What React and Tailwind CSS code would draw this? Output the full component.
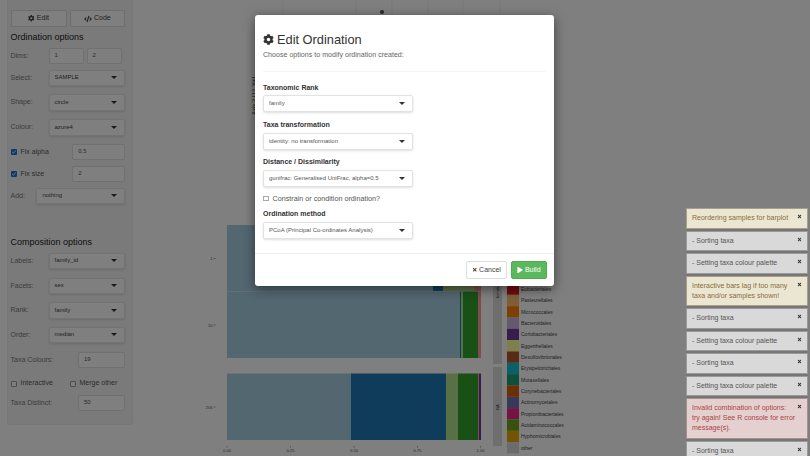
import React from "react";
import { FaCog, FaCode, FaPlay, FaTimes } from "react-icons/fa";

const sans = "font-['Liberation_Sans',Arial,sans-serif]";

function Caret() {
  return <span className="w-0 h-0 border-x-[3px] border-t-[3px] border-x-transparent border-t-[#333]" />;
}

function SideSelect({ value, className = "" }) {
  return (
    <div className={`h-[16.5px] bg-white border border-[#e6e6e6] rounded-[2px] shadow-sm flex items-center justify-between pl-[5px] pr-[7px] text-[6px] text-[#444] ${className}`}>
      <span>{value}</span>
      <Caret />
    </div>
  );
}

function SideInput({ value, className = "" }) {
  return (
    <div className={`h-[16.5px] bg-white border border-[#e0e0e0] rounded-[2px] flex items-center pl-[5px] text-[6px] text-[#555] ${className}`}>
      {value}
    </div>
  );
}

function Row({ label, top, children }) {
  return (
    <div className="flex items-center" style={{ marginTop: top }}>
      <span className="w-[38px] text-[7px] text-[#777] shrink-0">{label}</span>
      {children}
    </div>
  );
}

function Check({ checked }) {
  return checked ? (
    <span className="w-[6px] h-[6px] bg-[#2271d8] rounded-[1px] flex items-center justify-center">
      <svg viewBox="0 0 10 10" className="w-[6px] h-[6px]">
        <path d="M2 5l2 2 4-4" fill="none" stroke="#fff" strokeWidth="1.6" />
      </svg>
    </span>
  ) : (
    <span className="w-[6px] h-[6px] bg-white border border-[#999] rounded-[1px]" />
  );
}

function Sidebar() {
  return (
    <aside className="ml-[7px] w-[126px] h-[425px] shrink-0 bg-[#f5f5f5] border border-t-0 border-[#ececec] rounded-b-[3px] pl-[2.5px] pr-[7px] pt-[10px] flex flex-col">
      <div className="flex gap-[3px]">
        <div className="w-[57px] h-[17px] bg-white border border-[#ddd] rounded-[1px] flex items-center justify-center gap-[2px] text-[7px] text-[#444]">
          <FaCog className="w-[6.5px] h-[6.5px]" /> Edit
        </div>
        <div className="w-[56px] h-[17px] bg-white border border-[#ddd] rounded-[1px] flex items-center justify-center gap-[2px] text-[7px] text-[#444]">
          <FaCode className="w-[8px] h-[8px]" /> Code
        </div>
      </div>
      <h4 className="mt-[4px] text-[9px] leading-[12px] text-[#222]">Ordination options</h4>
      <Row label="Dims:" top="4.5px">
        <SideInput value="1" className="w-[35px]" />
        <SideInput value="2" className="w-[35px] ml-[3px]" />
      </Row>
      <Row label="Select:" top="5.5px"><SideSelect value="SAMPLE" className="w-[77px]" /></Row>
      <Row label="Shape:" top="8px"><SideSelect value="circle" className="w-[77px]" /></Row>
      <Row label="Colour:" top="8.5px"><SideSelect value="azure4" className="w-[77px]" /></Row>
      <div className="flex items-center mt-[8px] h-[16.5px]">
        <Check checked />
        <span className="ml-[4px] w-[52px] text-[7px] text-[#555]">Fix alpha</span>
        <SideInput value="0.5" className="w-[53px]" />
      </div>
      <div className="flex items-center mt-[5.5px] h-[16.5px]">
        <Check checked />
        <span className="ml-[4px] w-[52px] text-[7px] text-[#555]">Fix size</span>
        <SideInput value="2" className="w-[53px]" />
      </div>
      <div className="flex items-center mt-[5.5px]">
        <span className="w-[26px] text-[7px] text-[#777]">Add:</span>
        <SideSelect value="nothing" className="w-[89px]" />
      </div>
      <h4 className="mt-[32px] text-[9px] leading-[12px] text-[#222]">Composition options</h4>
      <Row label="Labels:" top="4.5px"><SideSelect value="family_id" className="w-[77px]" /></Row>
      <Row label="Facets:" top="8.5px"><SideSelect value="sex" className="w-[77px]" /></Row>
      <Row label="Rank:" top="8px"><SideSelect value="family" className="w-[77px]" /></Row>
      <Row label="Order:" top="8px"><SideSelect value="median" className="w-[77px]" /></Row>
      <div className="flex items-center justify-between mt-[8.5px]">
        <span className="text-[7px] text-[#777]">Taxa Colours:</span>
        <SideInput value="19" className="w-[47px]" />
      </div>
      <div className="flex items-center mt-[12px] h-[7px]">
        <Check />
        <span className="ml-[4px] w-[49px] text-[7px] text-[#555]">Interactive</span>
        <Check />
        <span className="ml-[4px] text-[7px] text-[#555]">Merge other</span>
      </div>
      <div className="flex items-center justify-between mt-[7.5px]">
        <span className="text-[7px] text-[#777]">Taxa Distinct:</span>
        <SideInput value="50" className="w-[47px]" />
      </div>
    </aside>
  );
}

const legend = [
  ["Eubacteriales", "#e31a1c"],
  ["Pasteurellales", "#fdbf6f"],
  ["Micrococcales", "#ff7f00"],
  ["Bacteroidales", "#cab2d6"],
  ["Coriobacteriales", "#6a3d9a"],
  ["Eggerthellales", "#ffff99"],
  ["Desulfovibrionales", "#b15928"],
  ["Erysipelotrichales", "#17becf"],
  ["Moraxellales", "#1b9e77"],
  ["Corynebacteriales", "#d95f02"],
  ["Actinomycetales", "#7570b3"],
  ["Propionibacteriales", "#e7298a"],
  ["Acidaminococcales", "#66a61e"],
  ["Hyphomicrobiales", "#e6ab02"],
  ["other", "#d9d9d9"],
];

function Plot() {
  const bar = (x1, x2, y, h, c) => <rect key={`${x1}-${y}`} x={x1} y={y} width={x2 - x1} height={h} fill={c} />;
  return (
    <svg width="677" height="456" viewBox="133 0 677 456" className="shrink-0 block">
      {[283, 356, 392, 428, 463, 500].map((x) => (
        <line key={x} x1={x} x2={x} y1="0" y2="15" stroke="#e6e6e6" strokeWidth="0.6" />
      ))}
      <circle cx="382" cy="12" r="2" fill="#555" />
      <text x="-115" y="256" transform="rotate(-90)" fontSize="6" fill="#222" fontFamily="Liberation Sans">Axis.2 [12.3%]</text>

      {bar(227, 481, 225, 133, "#ebebeb")}
      {bar(227, 433, 225, 66, "#a6cee3")}
      {bar(433, 443, 225, 66, "#1f78b4")}
      {bar(443, 474, 225, 66, "#b2df8a")}
      {bar(474, 481, 225, 66, "#fb9a99")}
      {bar(227, 460, 291.5, 66.5, "#a6cee3")}
      {bar(460, 461, 291.5, 66.5, "#1f78b4")}
      {bar(461, 463, 291.5, 66.5, "#b2df8a")}
      {bar(463, 478, 291.5, 66.5, "#33a02c")}
      {bar(478, 481, 291.5, 66.5, "#fb9a99")}
      {bar(227, 351, 373.5, 66.5, "#a6cee3")}
      {bar(351, 446, 373.5, 66.5, "#1f78b4")}
      {bar(446, 458, 373.5, 66.5, "#b2df8a")}
      {bar(458, 478, 373.5, 66.5, "#33a02c")}
      {bar(478, 479, 373.5, 66.5, "#fb9a99")}
      {bar(479, 481, 373.5, 66.5, "#6a3d9a")}

      {[["1", 258.5], ["10", 325], ["206", 407]].map(([t, y]) => (
        <g key={t}>
          <text x="212.5" y={y + 1.5} textAnchor="end" fontSize="4" fill="#555" fontFamily="Liberation Sans">{t}</text>
          <line x1="213.5" x2="215.5" y1={y} y2={y} stroke="#444" strokeWidth="0.5" />
        </g>
      ))}
      {[["0.00", 227], ["0.25", 290.5], ["0.50", 354], ["0.75", 417.5], ["1.00", 480.5]].map(([t, x]) => (
        <g key={t}>
          <line x1={x} x2={x} y1="446" y2="447.5" stroke="#444" strokeWidth="0.5" />
          <text x={x} y="452" textAnchor="middle" fontSize="4" fill="#555" fontFamily="Liberation Sans">{t}</text>
        </g>
      ))}

      {bar(493, 502, 220, 144, "#dcdcdc")}
      {bar(493, 502, 367, 79, "#dcdcdc")}
      <text x="-292" y="499" transform="rotate(-90)" textAnchor="middle" fontSize="4" fill="#333" fontFamily="Liberation Sans">female</text>
      <text x="-407" y="499" transform="rotate(-90)" textAnchor="middle" fontSize="4" fill="#333" fontFamily="Liberation Sans">NA</text>

      {legend.map(([name, c], i) => {
        const y = 283.5 + i * 11.33;
        return (
          <g key={name}>
            <rect x="507" y={y} width="12" height="11.33" fill={c} />
            <text x="521" y={y + 7.5} fontSize="5" fill="#444" fontFamily="Liberation Sans">{name}</text>
          </g>
        );
      })}
    </svg>
  );
}

function Field({ label, value, top }) {
  return (
    <div style={{ marginTop: top }}>
      <div className="text-[7px] leading-[9px] font-bold text-[#333]">{label}</div>
      <div className="mt-[3.5px] w-[150px] h-[17px] bg-white border border-[#e2e2e2] rounded-[2px] shadow-sm flex items-center justify-between pl-[5px] pr-[7px] text-[6px] text-[#555]">
        <span>{value}</span>
        <Caret />
      </div>
    </div>
  );
}

function Modal() {
  return (
    <div className="absolute left-[255px] top-[15px] w-[299px] h-[271px] bg-white rounded-[3px] shadow-[0_3px_12px_rgba(0,0,0,0.5)] flex flex-col">
      <div className="px-[8px] flex-1">
        <div className="mt-[17px] flex items-center gap-[3px] text-[#333]">
          <FaCog className="w-[11px] h-[11px]" />
          <h4 className="text-[12.8px] leading-[15px] text-[#333]">Edit Ordination</h4>
        </div>
        <p className="mt-[3.5px] text-[7.1px] leading-[9px] text-[#666]">Choose options to modify ordination created:</p>
        <div className="mt-[11px] h-px bg-[#f5f5f5]" />
        <Field label="Taxonomic Rank" value="family" top="11px" />
        <Field label="Taxa transformation" value="identity: no transformation" top="8px" />
        <Field label="Distance / Dissimilarity" value="gunifrac: Generalised UniFrac, alpha=0.5" top="7.5px" />
        <div className="mt-[7.5px] flex items-center gap-[4px]">
          <span className="w-[5.5px] h-[5.5px] border border-[#aaa] bg-white" />
          <span className="text-[7.2px] leading-[9px] text-[#555]">Constrain or condition ordination?</span>
        </div>
        <Field label="Ordination method" value="PCoA (Principal Co-ordinates Analysis)" top="6px" />
      </div>
      <div className="h-[33px] border-t border-[#eee] px-[7px] flex items-center justify-end gap-[4px]">
        <div className="w-[41px] h-[18px] bg-white border border-[#ddd] rounded-[2px] flex items-center justify-center gap-[1.5px] text-[7px] text-[#444]">
          <FaTimes className="w-[5.5px] h-[5.5px]" /> Cancel
        </div>
        <div className="w-[36px] h-[18px] bg-[#5cb85c] border border-[#4cae4c] rounded-[2px] flex items-center justify-center gap-[1.5px] text-[7px] text-white">
          <FaPlay className="w-[6px] h-[6px]" /> Build
        </div>
      </div>
    </div>
  );
}

const toastStyle = {
  d: "bg-[#d9d9d9] border-[#999] text-[#555]",
  w: "bg-[#ebe6d2] border-[#a8a08a] text-[#8a6d3b]",
  e: "bg-[#e5d0d0] border-[#a89090] text-[#a94442]",
};

function Toast({ kind = "d", children }) {
  return (
    <div className={`relative shrink-0 border ${toastStyle[kind]} pl-[5px] pr-[8px] py-[4.25px] text-[7px] leading-[10px] shadow-[0_0_1px_rgba(0,0,0,0.4)]`}>
      {children}
      <FaTimes className="absolute right-[5px] top-[5px] w-[5px] h-[5px] text-[#333]" />
    </div>
  );
}

function Toasts() {
  return (
    <div className="absolute left-[686px] top-[208px] w-[122px] h-[248px] overflow-hidden flex flex-col gap-[2px]">
      <Toast kind="w">Reordering samples for barplot</Toast>
      <Toast>- Sorting taxa</Toast>
      <Toast>- Setting taxa colour palette</Toast>
      <Toast kind="w">Interactive bars lag if too many<br />taxa and/or samples shown!</Toast>
      <Toast>- Sorting taxa</Toast>
      <Toast>- Setting taxa colour palette</Toast>
      <Toast>- Sorting taxa</Toast>
      <Toast>- Setting taxa colour palette</Toast>
      <Toast kind="e">Invalid combination of options:<br />try again! See R console for error<br />message(s).</Toast>
      <Toast>- Sorting taxa</Toast>
    </div>
  );
}

export default function App() {
  return (
    <div className={`relative w-[810px] h-[456px] overflow-hidden bg-white ${sans}`}>
      <div className="flex h-full">
        <Sidebar />
        <Plot />
      </div>
      <div className="absolute inset-0 bg-black/50" />
      <Modal />
      <Toasts />
    </div>
  );
}
